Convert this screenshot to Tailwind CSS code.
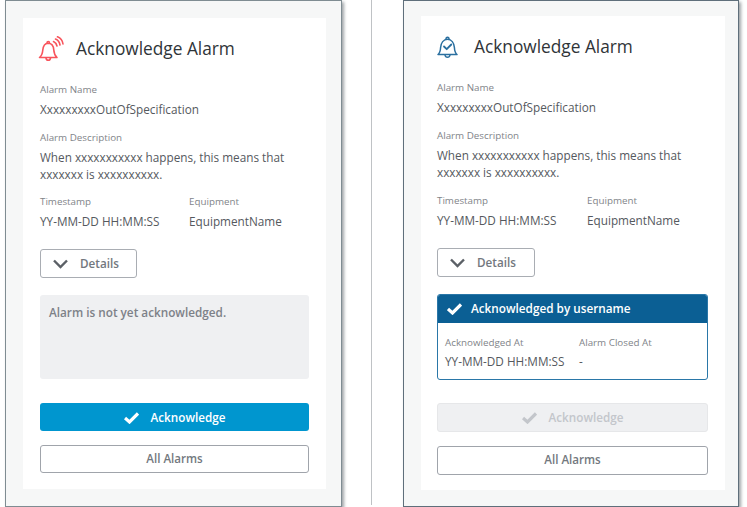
<!doctype html>
<html><head><meta charset="utf-8"><script src="https://cdn.jsdelivr.net/npm/@tailwindcss/browser@4"></script></head>
<body class="bg-white font-['Open_Sans',sans-serif] overflow-hidden">
<div class="flex w-[747px] h-[507px] items-start">
  <!-- left card -->
  <div class="ml-[5px] w-[337px] h-[507px] bg-[#f6f7f7] border border-[#7f8c92] shadow-[2px_2px_3px_rgba(80,90,95,0.55)] pl-[17px] pr-[15px] pt-[17px] pb-[16px] shrink-0">
    <div class="bg-white h-[471px] px-[17px] pt-[17px] flex flex-col">
      <div class="flex items-center h-[28px]">
        <svg class="w-[26px] h-[26px] -ml-[2px]" viewBox="0 0 26 26" fill="none" stroke="#f8545c" stroke-width="1.6" stroke-linejoin="round" stroke-linecap="round">
          <path d="M1.5 21.5 C4 19.5 4.5 17.5 4.8 14 C5.2 10 7 7.5 10 7.3 C13.5 7.3 15.5 10 15.8 14 C16 17.5 16.8 19.5 19 21.5 Z"/>
          <path d="M8 22 C8.5 25 12 25 12.5 22"/><path d="M9 7 C9 5 11.5 5 11.5 7"/>
          <path d="M15.5 5.5 C17.5 6.5 18.5 8 19 10"/><path d="M17.5 3 C20 4 21.5 6 22 9"/><path d="M19.5 0.8 C22.5 2 24.5 4.5 25 8"/>
        </svg>
        <h1 class="ml-[12px] text-[17.3px] leading-[28px] font-medium text-[#2f3438]">Acknowledge Alarm</h1>
      </div>
      <div class="mt-[19px] text-[9.8px] leading-[16px] text-[#7f8489]">Alarm Name</div>
      <div class="mt-[2px] text-[11.75px] leading-[18px] text-[#55595e]">XxxxxxxxxOutOfSpecification</div>
      <div class="mt-[12px] text-[9.8px] leading-[16px] text-[#7f8489]">Alarm Description</div>
      <div class="mt-[3px] text-[11.75px] leading-[17px] text-[#55595e]">When xxxxxxxxxxx happens, this means that<br>xxxxxxx is xxxxxxxxxx.</div>
      <div class="mt-[11px] grid grid-cols-[149px_1fr]">
        <div class="text-[9.8px] leading-[16px] text-[#7f8489]">Timestamp</div>
        <div class="text-[9.8px] leading-[16px] text-[#7f8489]">Equipment</div>
        <div class="mt-[2px] text-[11.75px] leading-[18px] text-[#55595e]">YY-MM-DD HH:MM:SS</div>
        <div class="mt-[2px] text-[11.75px] leading-[18px] text-[#55595e]">EquipmentName</div>
      </div>
      <button class="mt-[19px] w-[97px] h-[29px] border border-[#a9adb3] rounded-[3px] bg-white flex items-center pl-[12px] text-[11.7px] font-semibold text-[#73787e]">
        <svg class="w-[15px] h-[10px] mr-[12px]" viewBox="0 0 15 10" fill="none" stroke="#5b6066" stroke-width="2.4"><path d="M1 1.5 L7.5 8 L14 1.5"/></svg>Details
      </button>
      <div class="mt-[17px] h-[84px] bg-[#eff0f2] rounded-[3px] px-[9px] pt-[8px] text-[11.75px] leading-[18px] font-semibold text-[#7d8188]">Alarm is not yet acknowledged.</div>
      <button class="mt-[24px] h-[28px] pt-px bg-[#0096cf] rounded-[3px] flex items-center justify-center text-[11.7px] font-semibold text-white">
        <svg class="w-[15px] h-[12px] mr-[12px]" viewBox="0 0 15 12" fill="none" stroke="#fff" stroke-width="3.2"><path d="M1 6 L5.5 10 L14 1.5"/></svg>Acknowledge
      </button>
      <button class="mt-[14px] h-[28px] border border-[#a0a4ab] rounded-[3px] bg-white text-[11.6px] font-semibold text-[#73787e]">All Alarms</button>
    </div>
  </div>
  <!-- divider -->
  <div class="ml-[29px] w-px h-[505px] bg-[#bfc2c5] shrink-0"></div>
  <!-- right card -->
  <div class="ml-[31px] w-[336px] h-[507px] bg-[#f6f7f7] border border-[#5f6f7b] shadow-[2px_2px_3px_rgba(80,90,95,0.55)] pl-[17px] pr-[13px] pt-[15px] pb-[16px] shrink-0">
    <div class="bg-white h-[474px] pl-[16px] pr-[17px] pt-[17px] flex flex-col">
      <div class="flex items-center h-[28px]">
        <svg class="w-[21px] h-[24px]" viewBox="0 0 21 24" fill="none" stroke="#2a6f9f" stroke-width="1.5" stroke-linejoin="round" stroke-linecap="round">
          <path d="M1 19.5 C3 18 3.4 16 3.6 12.5 C4 8 6.5 4.3 10.5 4.3 C14.5 4.3 17 8 17.4 12.5 C17.6 16 18 18 20 19.5 Z"/>
          <path d="M8 20 C8.5 23 12.5 23 13 20"/><path d="M9 4 C9 1.5 12 1.5 12 4"/>
          <path d="M7 11.5 L9.7 14.2 L14.3 9.5" stroke-width="1.8"/>
        </svg>
        <h1 class="ml-[16px] text-[17.3px] leading-[28px] font-medium text-[#2f3438]">Acknowledge Alarm</h1>
      </div>
      <div class="mt-[19px] text-[9.8px] leading-[16px] text-[#7f8489]">Alarm Name</div>
      <div class="mt-[2px] text-[11.75px] leading-[18px] text-[#55595e]">XxxxxxxxxOutOfSpecification</div>
      <div class="mt-[12px] text-[9.8px] leading-[16px] text-[#7f8489]">Alarm Description</div>
      <div class="mt-[3px] text-[11.75px] leading-[17px] text-[#55595e]">When xxxxxxxxxxx happens, this means that<br>xxxxxxx is xxxxxxxxxx.</div>
      <div class="mt-[12px] grid grid-cols-[150px_1fr]">
        <div class="text-[9.8px] leading-[16px] text-[#7f8489]">Timestamp</div>
        <div class="text-[9.8px] leading-[16px] text-[#7f8489]">Equipment</div>
        <div class="mt-[2px] text-[11.75px] leading-[18px] text-[#55595e]">YY-MM-DD HH:MM:SS</div>
        <div class="mt-[2px] text-[11.75px] leading-[18px] text-[#55595e]">EquipmentName</div>
      </div>
      <button class="mt-[19px] w-[98px] h-[29px] border border-[#a9adb3] rounded-[3px] bg-white flex items-center pl-[12px] text-[11.7px] font-semibold text-[#73787e]">
        <svg class="w-[15px] h-[10px] mr-[12px]" viewBox="0 0 15 10" fill="none" stroke="#5b6066" stroke-width="2.4"><path d="M1 1.5 L7.5 8 L14 1.5"/></svg>Details
      </button>
      <div class="mt-[17px] h-[86px] border border-[#2a77a8] rounded-[3px] overflow-hidden">
        <div class="-mx-px -mt-px h-[29px] bg-[#0b5f94] flex items-center pl-[10px] text-[11.75px] font-semibold text-white">
          <svg class="w-[15px] h-[12px] mr-[9px]" viewBox="0 0 15 12" fill="none" stroke="#fff" stroke-width="3.2"><path d="M1 6 L5.5 10 L14 1.5"/></svg>Acknowledged by username
        </div>
        <div class="pl-[7px] pt-[12px] grid grid-cols-[134px_1fr]">
          <div class="text-[9.8px] leading-[16px] text-[#7f8489]">Acknowledged At</div>
          <div class="text-[9.8px] leading-[16px] text-[#7f8489]">Alarm Closed At</div>
          <div class="mt-[1px] text-[11.75px] leading-[18px] text-[#55595e]">YY-MM-DD HH:MM:SS</div>
          <div class="mt-[1px] text-[11.75px] leading-[18px] text-[#55595e]">-</div>
        </div>
      </div>
      <button class="mt-[23px] h-[29px] bg-[#eff0f2] border border-[#e6e7e9] rounded-[3px] flex items-center justify-center text-[11.7px] font-semibold text-[#c3c6cb]">
        <svg class="w-[15px] h-[12px] mr-[12px]" viewBox="0 0 15 12" fill="none" stroke="#c3c6cb" stroke-width="3.2"><path d="M1 6 L5.5 10 L14 1.5"/></svg>Acknowledge
      </button>
      <button class="mt-[14px] h-[29px] pb-px border border-[#a0a4ab] rounded-[3px] bg-white text-[11.6px] font-semibold text-[#73787e]">All Alarms</button>
    </div>
  </div>
</div>
</body></html>
